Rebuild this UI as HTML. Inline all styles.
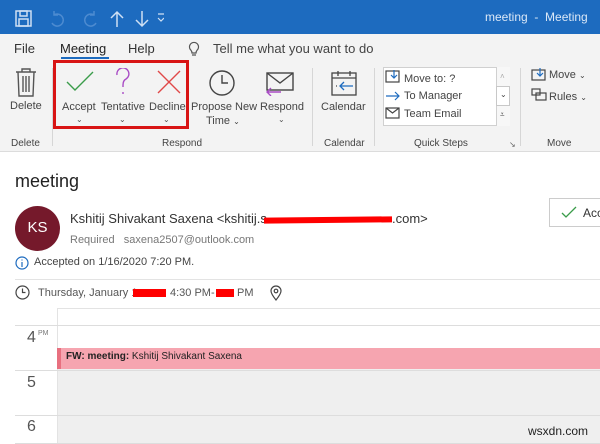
<!DOCTYPE html>
<html><head><meta charset="utf-8"><style>
*{margin:0;padding:0;box-sizing:border-box}
body{width:600px;height:444px;overflow:hidden;background:#fff;font-family:"Liberation Sans",sans-serif;position:relative;color:#333}
.a{position:absolute;white-space:nowrap}
.t{font-size:11px;color:#444}
.c{font-size:8px;color:#555}
</style></head><body>
<div class="a" style="left:0;top:0;width:600px;height:34px;background:#1d6bbf"></div>
<svg class="a" style="left:14px;top:9px" width="150" height="20" viewBox="0 0 150 20" fill="none" stroke="#cfe0f4" stroke-width="1.5">
<rect x="2" y="2" width="15" height="15"/><rect x="6" y="2" width="7" height="5"/><rect x="5" y="10" width="9" height="7"/>
<path d="M40 6a6 6 0 1 1-2 8M40 2v4h4" stroke="#4d8bd0"/>
<path d="M80 6a6 6 0 1 0 2 8M80 2v4h-4" stroke="#4d8bd0"/>
<path d="M103 18V3M97 9l6-6 6 6"/><path d="M128 2v15M122 11l6 6 6-6"/>
<path d="M148 5h6M148 9l3 3 3-3" stroke-width="1.2" transform="translate(-4 0)"/>
</svg>
<div class="a" style="left:485px;top:10px;font-size:12px;color:#dbe8f7">meeting&nbsp; - &nbsp;Meeting</div>
<div class="a" style="left:0;top:34px;width:600px;height:118px;background:#f3f3f3;border-bottom:1px solid #dcdcdc"></div>
<div class="a" style="left:14px;top:41px;font-size:13px;color:#333">File</div>
<div class="a" style="left:60px;top:41px;font-size:13px;color:#222">Meeting</div>
<div class="a" style="left:61px;top:57px;width:48px;height:2px;background:#1d6bbf"></div>
<div class="a" style="left:128px;top:41px;font-size:13px;color:#333">Help</div>
<svg class="a" style="left:187px;top:40px" width="14" height="18" fill="none" stroke="#555" stroke-width="1.2"><path d="M3 9a4.5 4.5 0 1 1 8 0c-1 1.5-2 2-2 4H5c0-2-1-2.5-2-4zM5 15h4"/></svg>
<div class="a" style="left:213px;top:41px;font-size:13px;color:#444">Tell me what you want to do</div>
<svg class="a" style="left:14px;top:67px" width="24" height="30" fill="none" stroke="#555" stroke-width="1.4"><path d="M2 5h20M8 5V2h8v3M4 5l1 24h14l1-24M9 9v16M12 9v16M15 9v16"/></svg>
<div class="a t" style="left:10px;top:100px">Delete</div>
<div class="a t" style="left:11px;top:138px;font-size:10px">Delete</div>
<div class="a" style="left:52px;top:68px;width:1px;height:78px;background:#d6d6d6"></div>
<svg class="a" style="left:66px;top:70px" width="28" height="24" fill="none" stroke="#3a9c4a" stroke-width="1.4"><path d="M1 12l8 8L27 2"/></svg>
<div class="a t" style="left:62px;top:101px">Accept</div>
<svg class="a" style="left:115px;top:68px" width="16" height="28" fill="none" stroke="#a94cc5" stroke-width="1.4"><path d="M2 7a6 6 0 1 1 9 4c-2 1-3 3-3 6v2M8 24v2"/></svg>
<div class="a t" style="left:101px;top:101px">Tentative</div>
<svg class="a" style="left:157px;top:70px" width="24" height="24" fill="none" stroke="#e04848" stroke-width="1.4"><path d="M1 1l22 22M23 1L1 23"/></svg>
<div class="a t" style="left:149px;top:101px">Decline</div>
<div class="a c" style="left:76px;top:115px">⌄</div>
<div class="a c" style="left:119px;top:115px">⌄</div>
<div class="a c" style="left:163px;top:115px">⌄</div>
<div class="a" style="left:53px;top:60px;width:136px;height:69px;border:3px solid #d81414"></div>
<svg class="a" style="left:208px;top:69px" width="28" height="28" fill="none" stroke="#444" stroke-width="1.4"><circle cx="14" cy="14" r="12"/><path d="M14 6v8h6"/></svg>
<div class="a t" style="left:191px;top:101px">Propose New</div>
<div class="a t" style="left:206px;top:115px">Time <span style="font-size:8px">⌄</span></div>
<svg class="a" style="left:265px;top:72px" width="30" height="24" fill="none" stroke-width="1.4"><rect x="2" y="1" width="26" height="17" stroke="#444"/><path d="M2 1l13 10L28 1" stroke="#444"/><path d="M16 20H2M6 16l-4 4 4 4" stroke="#a94cc5"/></svg>
<div class="a t" style="left:260px;top:101px">Respond</div>
<div class="a c" style="left:278px;top:115px">⌄</div>
<div class="a t" style="left:162px;top:138px;font-size:10px">Respond</div>
<div class="a" style="left:312px;top:68px;width:1px;height:78px;background:#d6d6d6"></div>
<svg class="a" style="left:330px;top:69px" width="28" height="28" fill="none" stroke="#444" stroke-width="1.3"><rect x="2" y="4" width="24" height="22"/><path d="M2 9h24M8 2v5M20 2v5"/><path d="M23 17H10M14 13l-4 4 4 4" stroke="#1d6bbf"/><path d="M6 17h1"/></svg>
<div class="a t" style="left:321px;top:101px">Calendar</div>
<div class="a t" style="left:324px;top:138px;font-size:10px">Calendar</div>
<div class="a" style="left:374px;top:68px;width:1px;height:78px;background:#d6d6d6"></div>
<div class="a" style="left:383px;top:67px;width:127px;height:59px;background:#fff;border:1px solid #d0d0d0"></div>
<div class="a" style="left:496px;top:67px;width:14px;height:59px;border-left:1px solid #d0d0d0;background:#f7f7f7"></div>
<div class="a" style="left:496px;top:86px;width:14px;height:20px;border:1px solid #c8c8c8;background:#fff"></div>
<div class="a" style="left:500px;top:72px;font-size:8px;color:#aaa">˄</div>
<div class="a" style="left:500px;top:90px;font-size:8px;color:#444">⌄</div>
<div class="a" style="left:500px;top:110px;font-size:8px;color:#444">⩡</div>
<svg class="a" style="left:385px;top:69px" width="16" height="52" fill="none" stroke-width="1.2"><rect x="1" y="2" width="13" height="11" stroke="#444"/><path d="M9 1v8M6 6l3 3 3-3" stroke="#1d6bbf"/><path d="M1 27h13M10 23l4 4-4 4" stroke="#1d6bbf"/><rect x="1" y="39" width="13" height="10" stroke="#444"/><path d="M1 39l6.5 5 6.5-5" stroke="#444"/></svg>
<div class="a t" style="left:404px;top:73px">Move to: ?</div>
<div class="a t" style="left:404px;top:90px">To Manager</div>
<div class="a t" style="left:404px;top:108px">Team Email</div>
<div class="a t" style="left:414px;top:138px;font-size:10px">Quick Steps</div>
<div class="a" style="left:509px;top:140px;font-size:8px;color:#666">↘</div>
<div class="a" style="left:520px;top:68px;width:1px;height:78px;background:#d6d6d6"></div>
<svg class="a" style="left:531px;top:68px" width="16" height="34" fill="none" stroke-width="1.2"><rect x="1" y="2" width="13" height="10" stroke="#444"/><path d="M9 0v8M6 5l3 3 3-3" stroke="#1d6bbf"/><rect x="1" y="21" width="8" height="6" stroke="#444"/><rect x="5" y="25" width="10" height="7" stroke="#444"/></svg>
<div class="a t" style="left:549px;top:69px">Move <span style="font-size:8px">⌄</span></div>
<div class="a t" style="left:549px;top:91px">Rules <span style="font-size:8px">⌄</span></div>
<div class="a t" style="left:547px;top:138px;font-size:10px">Move</div>
<div class="a" style="left:15px;top:171px;font-size:18px;color:#222">meeting</div>
<div class="a" style="left:549px;top:198px;width:60px;height:29px;border:1px solid #ccc;background:#fff"></div>
<svg class="a" style="left:561px;top:206px" width="16" height="13" fill="none" stroke="#3a9c4a" stroke-width="1.3"><path d="M1 7l4 4L15 1"/></svg>
<div class="a t" style="left:583px;top:206px;font-size:12px;color:#333">Acc</div>
<div class="a" style="left:15px;top:206px;width:45px;height:45px;border-radius:50%;background:#75192b"></div>
<div class="a" style="left:15px;top:219px;width:45px;text-align:center;color:#fff;font-size:15px">KS</div>
<div class="a" style="left:70px;top:211px;font-size:13px;color:#333">Kshitij Shivakant Saxena &lt;kshitij.s</div>
<div class="a" style="left:392px;top:211px;font-size:13px;color:#333">.com&gt;</div>
<div class="a" style="left:264px;top:217px;width:128px;height:6px;background:#f00;transform:rotate(-0.6deg)"></div>
<div class="a" style="left:70px;top:234px;font-size:11px;color:#777">Required&nbsp;&nbsp; saxena2507@outlook.com</div>
<svg class="a" style="left:15px;top:256px" width="14" height="14" fill="none" stroke="#1d6bbf" stroke-width="1.2"><circle cx="7" cy="7" r="6"/><path d="M7 6v5M7 3.5v1"/></svg>
<div class="a" style="left:34px;top:256px;font-size:11px;color:#444">Accepted on 1/16/2020 7:20 PM.</div>
<div class="a" style="left:15px;top:279px;width:585px;height:1px;background:#e3e3e3"></div>
<svg class="a" style="left:15px;top:285px" width="15" height="15" fill="none" stroke="#444" stroke-width="1.2"><circle cx="7.5" cy="7.5" r="6.5"/><path d="M7.5 3.5v4h3"/></svg>
<div class="a" style="left:38px;top:287px;font-size:11px;color:#555">Thursday, January 1</div>
<div class="a" style="left:170px;top:287px;font-size:11px;color:#555">4:30 PM-</div>
<div class="a" style="left:237px;top:287px;font-size:11px;color:#555">PM</div>
<div class="a" style="left:133px;top:289px;width:33px;height:8px;background:#f00"></div>
<div class="a" style="left:216px;top:289px;width:18px;height:8px;background:#f00"></div>
<svg class="a" style="left:270px;top:285px" width="12" height="16" fill="none" stroke="#444" stroke-width="1.2"><path d="M6 15C2 10 1 8 1 6a5 5 0 0 1 10 0c0 2-1 4-5 9z"/><circle cx="6" cy="6" r="1.8"/></svg>
<div class="a" style="left:57px;top:308px;width:543px;height:1px;background:#e3e3e3"></div>
<div class="a" style="left:57px;top:308px;width:1px;height:136px;background:#e3e3e3"></div>
<div class="a" style="left:15px;top:325px;width:585px;height:1px;background:#ddd"></div>
<div class="a" style="left:58px;top:369px;width:542px;height:75px;background:#efefef"></div>
<div class="a" style="left:15px;top:370px;width:585px;height:1px;background:#ddd"></div>
<div class="a" style="left:15px;top:415px;width:585px;height:1px;background:#ddd"></div>
<div class="a" style="left:15px;top:443px;width:585px;height:1px;background:#ddd"></div>
<div class="a" style="left:27px;top:329px;font-size:16px;color:#555">4</div>
<div class="a" style="left:38px;top:330px;font-size:7px;color:#777">PM</div>
<div class="a" style="left:27px;top:374px;font-size:16px;color:#555">5</div>
<div class="a" style="left:27px;top:418px;font-size:16px;color:#555">6</div>
<div class="a" style="left:57px;top:348px;width:543px;height:21px;background:#f6a5b0;border-left:4px solid #e8707f"></div>
<div class="a" style="left:66px;top:351px;font-size:10px;color:#222"><b>FW: meeting:</b> Kshitij Shivakant Saxena</div>
<div class="a" style="left:528px;top:424px;font-size:12px;color:#222">wsxdn.com</div>
</body></html>
